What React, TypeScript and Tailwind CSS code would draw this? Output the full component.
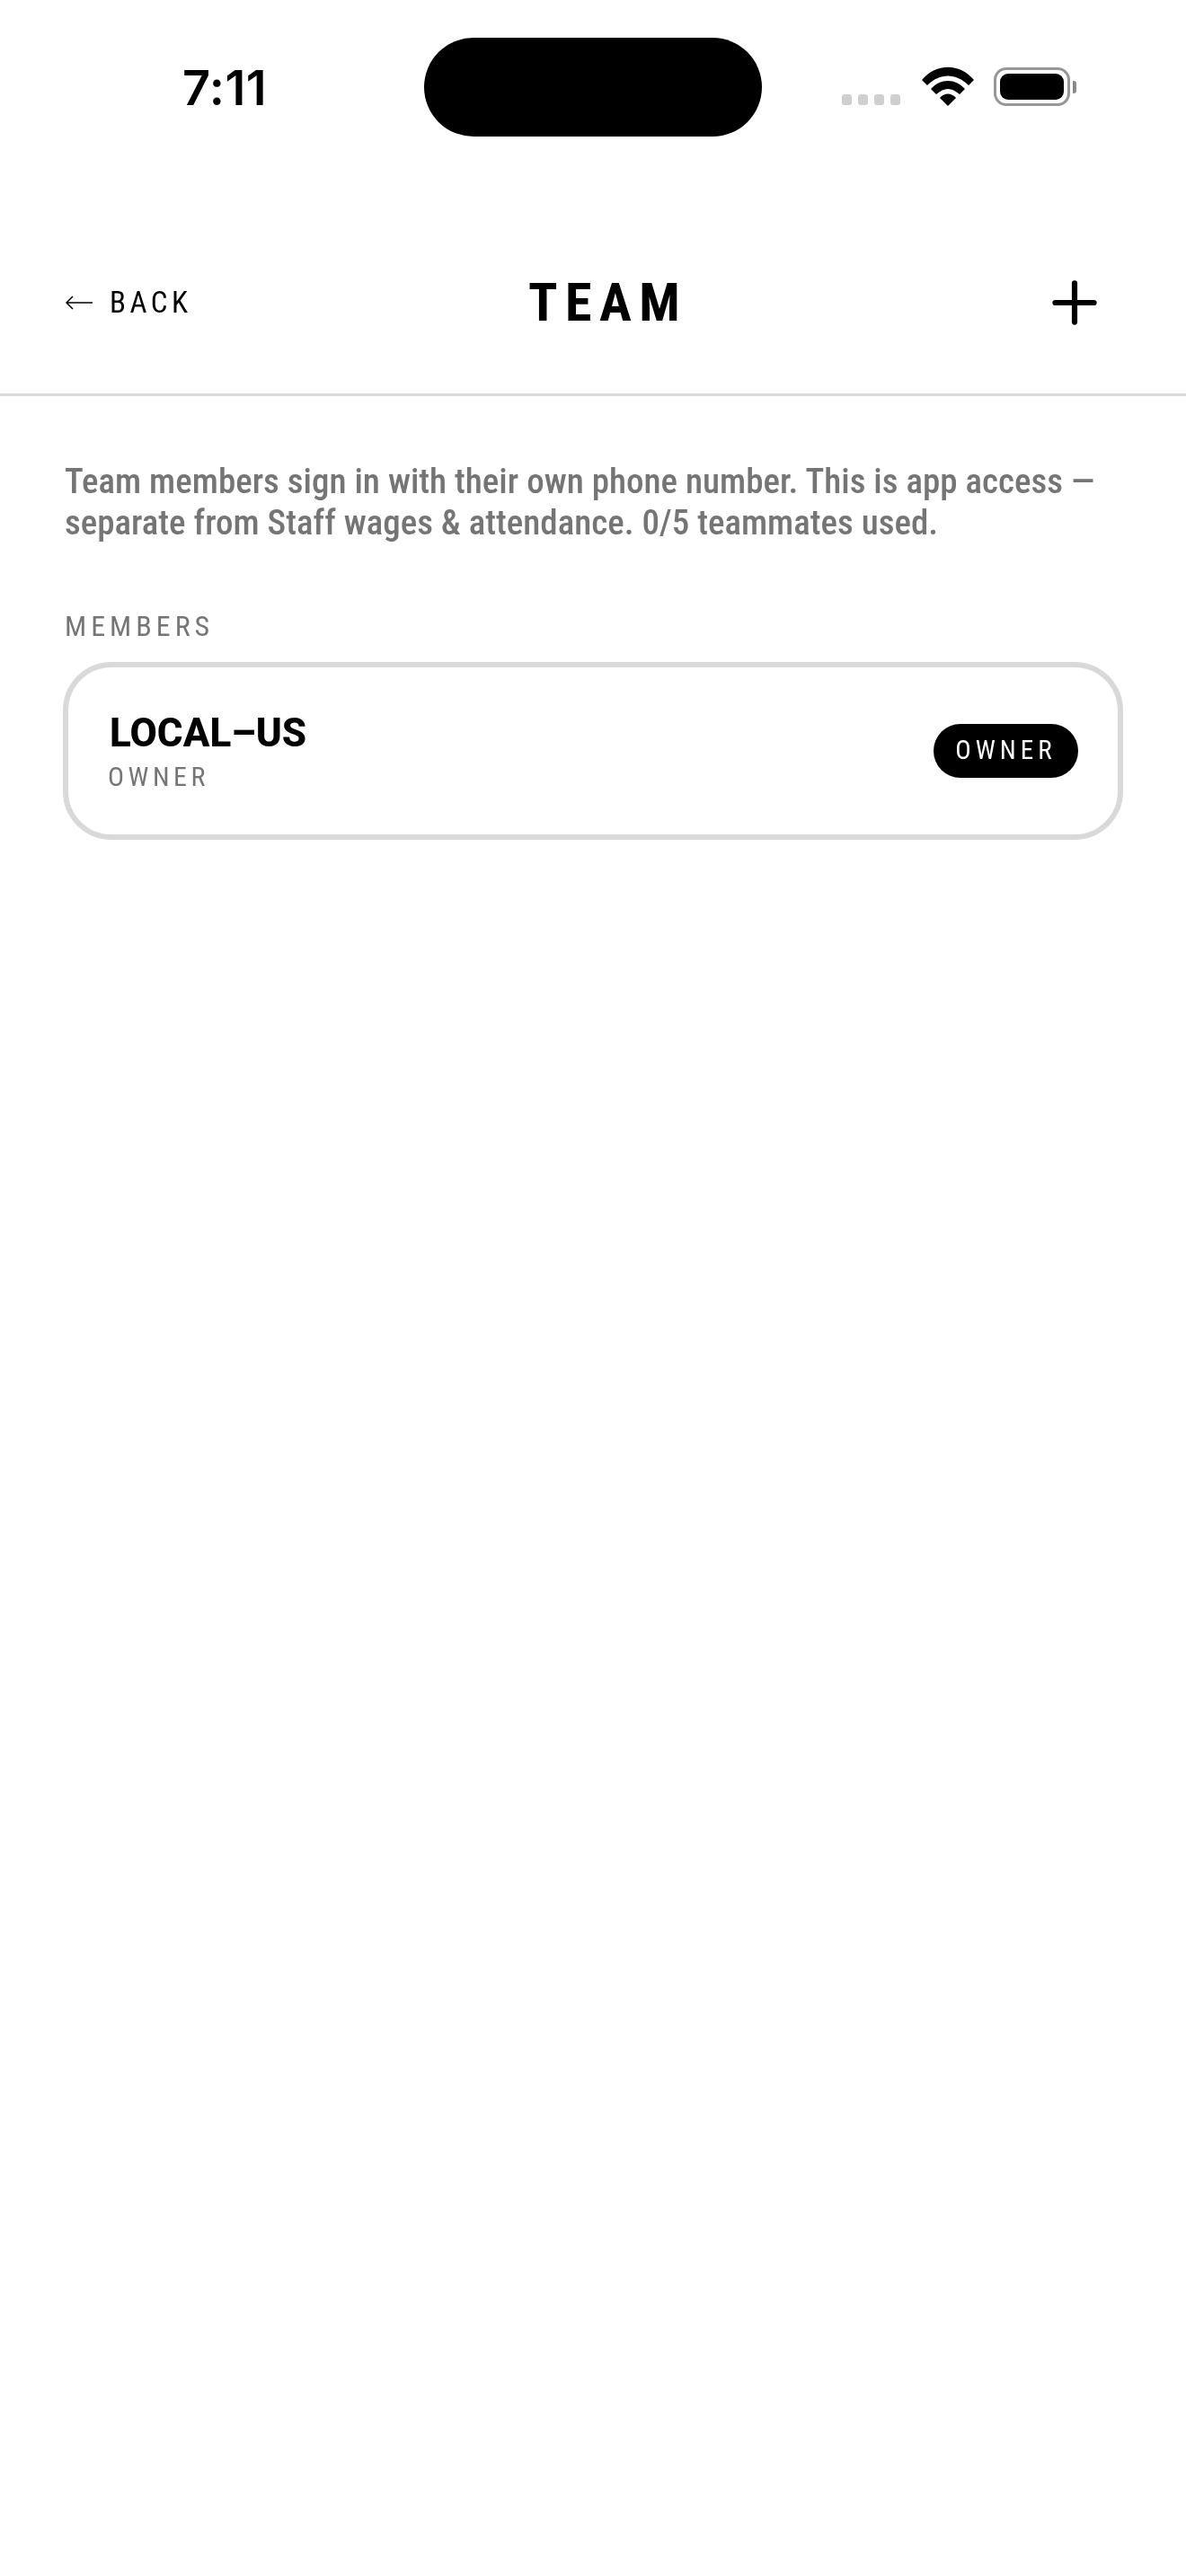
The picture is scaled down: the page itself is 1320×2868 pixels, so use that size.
import { Plus } from 'lucide-react';

const condensed = "[font-family:Roboto,'Liberation_Sans',sans-serif] [font-stretch:75%]";

const StatusBar = () => (
    <div className="relative h-[194px]">
        <div className="absolute left-[203px] top-[66px] text-[54px] leading-[64px] font-semibold tracking-[0.5px] text-black [font-family:Inter,sans-serif]">7:11</div>
        <div className="absolute left-[472px] top-[42px] h-[110px] w-[376px] rounded-[56px] bg-black" />
        <div className="absolute left-[937px] top-[105px] flex gap-[7px]">
            <span className="h-[12px] w-[11px] rounded-[3px] bg-[#cfcfcf]" />
            <span className="h-[12px] w-[11px] rounded-[3px] bg-[#cfcfcf]" />
            <span className="h-[12px] w-[11px] rounded-[3px] bg-[#cfcfcf]" />
            <span className="h-[12px] w-[11px] rounded-[3px] bg-[#cfcfcf]" />
        </div>
        <svg className="absolute left-[1026px] top-[74px]" width="58" height="44" viewBox="0 0 58 44">
            <path d="M0 15 C16 -4 42 -4 58 15 L52 21 C38 7 20 7 6 21 Z" fill="#000" />
            <path d="M10 25 C21 13 37 13 48 25 L42 31 C33 23 25 23 16 31 Z" fill="#000" />
            <path d="M20 35 C25 29 33 29 38 35 L29 44 Z" fill="#000" />
        </svg>
        <div className="absolute left-[1106px] top-[75px] flex items-center">
            <div className="h-[43px] w-[85px] rounded-[14px] border-[3px] border-[#979797] p-[4px]">
                <div className="h-full w-full rounded-[9px] bg-black" />
            </div>
            <div className="ml-[3px] h-[14px] w-[4px] rounded-r-[3px] bg-[#8a8a8a]" />
        </div>
    </div>
);

export default function App() {
    return (
        <div className="h-[2868px] w-[1320px] will-change-transform">
            <StatusBar />
            <header className="relative flex h-[247px] items-center justify-between border-b-[3px] border-[#d9d9d9] pl-[72px] pr-[87px] pt-[42px]">
                <div className={`flex items-center gap-[18px] text-[33px] tracking-[4.5px] text-black ${condensed}`}>
                    <svg width="32" height="24" viewBox="0 0 32 24" fill="none" stroke="#000" strokeWidth="1.5">
                        <path d="M31 12H2M9 5l-7 7 7 7" />
                    </svg>
                    <span>BACK</span>
                </div>
                <h1 className={`absolute left-[588px] text-[60px] font-bold tracking-[8.5px] text-black ${condensed}`}>TEAM</h1>
                <Plus size={74} strokeWidth={2} className="text-black" />
            </header>
            <main className="px-[72px] pt-[72px]">
                <p className={`text-[39px] leading-[46px] font-medium text-[#757575] ${condensed}`}>
                    Team members sign in with their own phone number. This is app access — separate from Staff wages &amp; attendance. 0/5 teammates used.
                </p>
                <div className={`mt-[72px] text-[32px] leading-[40px] tracking-[5px] text-[#757575] ${condensed}`}>MEMBERS</div>
                <div className="mx-[-2px] mt-[20px] flex h-[198px] items-center justify-between rounded-[54px] border-[6px] border-[#d9d9d9] pl-[46px] pr-[44px]">
                    <div className="pt-[2px]">
                        <div className="text-[44px] leading-[52px] font-extrabold text-black [font-family:Roboto,sans-serif]">LOCAL–US</div>
                        <div className={`mt-[4px] -ml-[2px] text-[30px] leading-[38px] tracking-[4.5px] text-[#757575] ${condensed}`}>OWNER</div>
                    </div>
                    <span className={`flex h-[60px] w-[161px] items-center justify-center rounded-[30px] bg-black text-[29px] tracking-[5px] text-white ${condensed}`}>OWNER</span>
                </div>
            </main>
        </div>
    );
}
